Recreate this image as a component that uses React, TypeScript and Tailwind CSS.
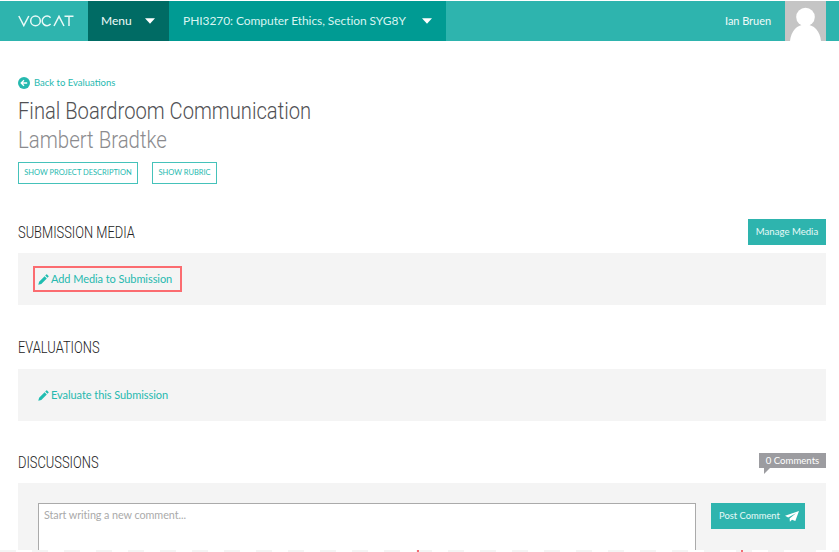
import type { ReactNode } from "react";

function Pencil() {
  return (
    <svg className="block h-[11px] w-[11px] shrink-0" viewBox="0 0 11 11" fill="#1fbdb1">
      <path d="M0.3 10.7 1.1 7.7 6.6 2.2 8.8 4.4 3.3 9.9zM7.2 1.6 8.3.5Q8.7.1 9.1.5l1.4 1.4q.4.4 0 .8L9.4 3.8z" />
    </svg>
  );
}

function Caret() {
  return (
    <svg className="block h-[6px] w-[10px] shrink-0" viewBox="0 0 10 6" fill="#fff">
      <path d="M0 .3h10L5 5.8z" />
    </svg>
  );
}

function SectionTitle({ children }: { children: ReactNode }) {
  return (
    <h2 className="origin-left scale-x-[0.805] font-['Roboto',sans-serif] text-[16px] leading-[20px] font-light whitespace-nowrap text-[#222]">
      {children}
    </h2>
  );
}

export default function App() {
  return (
    <div className="flex h-[552px] w-[839px] flex-col overflow-hidden bg-white pt-px font-['Lato',sans-serif] whitespace-nowrap">
      <header className="flex h-[40px] shrink-0 bg-[#2eb4ae] text-[#f0fbfa]">
        <div className="flex w-[88px] items-center pl-[18px]">
          <svg className="block h-[12px] w-[56px]" viewBox="0 0 56 12" fill="none" stroke="#e8f9f7" strokeWidth="1.5">
            <path d="M.8 1 5.8 10.6 10.8 1M32.6 9.1A4.8 4.8 0 1 1 32.6 2.7M36 11 41 1.3 46 11M46.5 1.3H55.5M51 1.3V11" />
            <circle cx="17.5" cy="5.9" r="4.8" />
          </svg>
        </div>
        <div className="flex w-[81px] items-center bg-[#006b64] pl-[13px]">
          <span className="w-[44px] text-[12px]">Menu</span>
          <Caret />
        </div>
        <div className="flex w-[277px] items-center bg-[#009b93] pl-[14px]">
          <span className="w-[239px] text-[12px] tracking-[-0.07px] text-[#d8f4f1]">PHI3270: Computer Ethics, Section SYG8Y</span>
          <Caret />
        </div>
        <div className="ml-auto flex items-center">
          <span className="mr-[14px] text-[11px] tracking-[-0.05px]">Ian Bruen</span>
          <svg className="mr-[13px] block h-[40px] w-[41px] bg-[#c5c5c5]" viewBox="0 0 41 40" fill="#fff">
            <circle cx="20.5" cy="16" r="9.3" />
            <path d="M5 40C6 30 12 23.5 20.5 23.5S35 30 36 40z" />
          </svg>
        </div>
      </header>

      <main className="flex h-[509px] shrink-0 flex-col overflow-hidden pr-[13px] pl-[18px]">
        <a className="mt-[35px] flex h-[14px] shrink-0 items-center text-[9.5px] text-[#26b9af]">
          <svg className="mr-[4px] block h-[12px] w-[12px]" viewBox="0 0 12 12">
            <circle cx="6" cy="6" r="6" fill="#26b9af" />
            <path d="M9.2 6H3.3M6 3.2 3.2 6 6 8.8" fill="none" stroke="#fff" strokeWidth="1.3" />
          </svg>
          <span>Back to Evaluations</span>
        </a>
        <h1 className="mt-[7px] origin-left scale-x-[0.877] font-['Roboto',sans-serif] text-[23px] leading-[29px] font-light text-[#515154]">
          Final Boardroom Communication
        </h1>
        <p className="origin-left scale-x-[0.888] font-['Roboto',sans-serif] text-[23px] leading-[30px] font-light text-[#8b8b8e]">
          Lambert Bradtke
        </p>
        <div className="mt-[6px] flex gap-[14px] text-[7.5px] text-[#26b9af]">
          <button className="h-[22px] w-[120px] border border-[#45c2ba]">SHOW PROJECT DESCRIPTION</button>
          <button className="h-[22px] w-[65px] border border-[#45c2ba]">SHOW RUBRIC</button>
        </div>

        <section className="mt-[35px]">
          <div className="flex h-[26px] items-center justify-between">
            <div className="pt-[2px]">
              <SectionTitle>SUBMISSION MEDIA</SectionTitle>
            </div>
            <button className="h-[26px] w-[78px] shrink-0 bg-[#2eb4ae] text-[9.6px] text-[#e6faf8]">Manage Media</button>
          </div>
          <div className="mt-[8px] h-[52px] bg-[#f4f4f4] pt-[13px] pl-[15px]">
            <a className="flex h-[26px] w-[149px] items-center gap-[2px] border-2 border-[#fb6c70] pl-[3px] text-[11px] tracking-[-0.07px] text-[#26b9af]">
              <Pencil />
              <span>Add Media to Submission</span>
            </a>
          </div>
        </section>

        <section className="mt-[33px]">
          <SectionTitle>EVALUATIONS</SectionTitle>
          <div className="mt-[11px] flex h-[52px] items-center gap-[2px] bg-[#f4f4f4] pl-[20px] text-[11px] tracking-[-0.06px] text-[#26b9af]">
            <Pencil />
            <span>Evaluate this Submission</span>
          </div>
        </section>

        <section className="mt-[32px]">
          <div className="flex h-[20px] items-start justify-between">
            <SectionTitle>DISCUSSIONS</SectionTitle>
            <div className="flex w-[67px] shrink-0 flex-col">
              <span className="h-[15px] bg-[#9c9ca0] text-center text-[9.6px] leading-[15px] text-white">0 Comments</span>
              <svg className="ml-[5px] block h-[6px] w-[6px]" viewBox="0 0 6 6" fill="#9c9ca0">
                <path d="M0 0h6L0 6z" />
              </svg>
            </div>
          </div>
          <div className="mt-[10px] flex h-[67px] items-start bg-[#f4f4f4] pt-[20px] pl-[20px]">
            <div className="h-[47px] w-[658px] border border-b-0 border-[#aaa] bg-white pt-[3px] pl-[5px] text-[10.8px] leading-[15px] tracking-[-0.07px] text-[#aaa]">
              Start writing a new comment...
            </div>
            <button className="ml-[15px] flex h-[26px] w-[94px] items-center bg-[#2eb4ae] pl-[8px] text-[9.4px] text-[#e6faf8]">
              <span className="w-[66px] text-left">Post Comment</span>
              <svg className="block h-[11px] w-[14px]" viewBox="0 0 14 11" fill="#fff">
                <path d="M14 0 0 4.7 3.2 6.6 11 2.3 4.6 7.4 4.9 10.8 7 8.8 10.3 10z" />
              </svg>
            </button>
          </div>
        </section>
      </main>
      <div className="flex h-[2px] shrink-0 bg-[repeating-linear-gradient(90deg,#f4f4f4_0_16px,#fff_16px_32px)]">
        <i className="ml-[417px] h-[2px] w-[2px] bg-[#f26d74]" />
        <i className="ml-[322px] h-[2px] w-[2px] bg-[#f26d74]" />
      </div>
    </div>
  );
}
